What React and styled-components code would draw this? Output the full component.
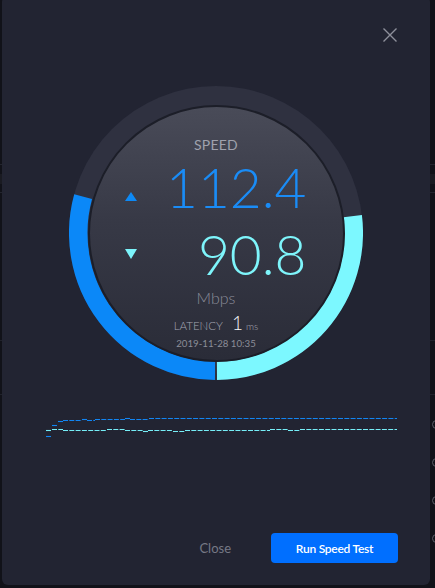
import React from "react";
import styled, { createGlobalStyle } from "styled-components";

const Global = createGlobalStyle`
  html, body {
    margin: 0;
    padding: 0;
    background: #111219;
    overflow: hidden;
  }
  body {
    width: 435px;
    height: 588px;
    position: relative;
    font-family: Lato, "Noto Sans", sans-serif;
  }
`;

/* ---------- page behind the dialog ---------- */

const Page = styled.div`
  width: 450px;
  padding-top: 164px;
  box-sizing: border-box;
`;

const TableHead = styled.div`
  height: 29px;
  border-top: 1px solid #23252e;
  border-bottom: 1px solid #23252e;
  box-sizing: border-box;
  display: flex;
  align-items: center;
`;

const HeadCell = styled.div`
  height: 10px;
  flex: 1;
  background: #1a1b22;
`;

const Section = styled.div`
  height: ${(p) => p.$h}px;
  border-bottom: ${(p) => (p.$open ? "0" : "1px solid #20222b")};
  box-sizing: border-box;
`;

const DeviceRow = styled.div`
  height: 38px;
  display: flex;
  align-items: center;
  justify-content: flex-end;
  padding-right: 9px;
`;

const StatusRing = styled.span`
  width: 7px;
  height: 7px;
  border: 1.5px solid #5b5d66;
  border-radius: 50%;
`;

/* ---------- dialog ---------- */

const Dialog = styled.div`
  position: absolute;
  left: 2px;
  top: -4px;
  width: 428px;
  height: 589px;
  box-sizing: border-box;
  background: #222432;
  border-radius: 6px;
  display: flex;
  flex-direction: column;
`;

const Header = styled.div`
  display: flex;
  justify-content: flex-end;
  padding: 32px 33px 0 0;
`;

const CloseX = styled.button`
  width: 14px;
  height: 14px;
  padding: 0;
  border: 0;
  background: transparent;
  display: block;
  cursor: pointer;
  svg {
    display: block;
  }
`;

const Gauge = styled.div`
  margin-top: 44px;
  align-self: center;
  width: 294px;
  height: 294px;
  display: grid;
  > * {
    grid-area: 1 / 1;
  }
`;

const RingArt = styled.svg`
  width: 294px;
  height: 294px;
  display: block;
`;

const Face = styled.div`
  place-self: center;
  width: 257px;
  height: 257px;
  box-sizing: border-box;
  border-radius: 50%;
  border: 2px solid #1c1e28;
  background: linear-gradient(180deg, #494b58 0%, #373946 45%, #2a2c38 100%);
  display: flex;
  flex-direction: column;
  align-items: center;
  padding-top: 30px;
`;

const Caption = styled.div`
  font-size: 14px;
  line-height: 16px;
  color: #9fa1ad;
  letter-spacing: 0.2px;
`;

const Reading = styled.div`
  margin-top: ${(p) => p.$gap}px;
  width: 100%;
  box-sizing: border-box;
  padding: 0 36px 0 35.5px;
  height: 56px;
  display: flex;
  align-items: flex-start;
`;

const Arrow = styled.svg`
  width: 12px;
  height: 10px;
  margin-top: ${(p) => p.$drop}px;
  flex: none;
`;

const Value = styled.div`
  flex: 1;
  text-align: right;
  font-size: 55px;
  line-height: 56px;
  font-weight: 300;
  color: ${(p) => p.$color};
`;

const Unit = styled.div`
  margin-top: 6px;
  font-size: 16px;
  line-height: 20px;
  font-weight: 300;
  color: #8a8c98;
`;

const Latency = styled.div`
  margin-top: 5px;
  display: flex;
  align-items: baseline;
  line-height: 20px;
`;

const LatencyLabel = styled.span`
  font-size: 11.5px;
  font-weight: 300;
  color: #a4a6b2;
`;

const LatencyValue = styled.span`
  font-size: 19px;
  font-weight: 300;
  color: #f4f5f7;
  margin-left: 9px;
`;

const LatencyUnit = styled.span`
  font-size: 10px;
  font-weight: 300;
  color: #a4a6b2;
  margin-left: 3px;
`;

const Stamp = styled.div`
  margin-top: 1px;
  font-size: 9.7px;
  line-height: 12px;
  color: #8b8d98;
`;

const History = styled.svg`
  margin: 30px 0 0 42px;
  width: 356px;
  height: 30px;
  display: block;
`;

const Footer = styled.div`
  margin-top: auto;
  display: flex;
  justify-content: flex-end;
  align-items: center;
  gap: 40px;
  padding: 0 32px 22px 0;
`;

const TextButton = styled.button`
  border: 0;
  background: transparent;
  padding: 0;
  font-family: inherit;
  font-size: 13px;
  color: #767885;
  cursor: pointer;
`;

const PrimaryButton = styled.button`
  width: 127px;
  height: 30px;
  border: 0;
  border-radius: 4px;
  background: #006fff;
  color: #ffffff;
  font-family: inherit;
  font-size: 12px;
  font-weight: 600;
  letter-spacing: -0.25px;
  cursor: pointer;
`;

/* ---------- helpers ---------- */

const C = 147;
const R = 137.75;

function pt(deg) {
  const a = (deg * Math.PI) / 180;
  return [C + R * Math.cos(a), C + R * Math.sin(a)];
}

function arc(from, to) {
  const [x1, y1] = pt(from);
  const [x2, y2] = pt(to);
  const large = to - from > 180 ? 1 : 0;
  return `M ${x1} ${y1} A ${R} ${R} 0 ${large} 1 ${x2} ${y2}`;
}

// [x start, x end, y] in chart coordinates (chart origin at x 44, y 410)
const upload = [
  [8, 13, 15],
  [14, 19, 11],
  [19, 38, 10],
  [38, 43, 9],
  [43, 51, 10],
  [51, 81, 9],
  [81, 86, 8],
  [86, 105, 9],
  [105, 353, 8],
];

const uploadStart = [[2, 7, 26]];

const download = [
  [2, 7, 20],
  [8, 19, 19],
  [19, 63, 20],
  [63, 81, 19],
  [81, 99, 20],
  [99, 104, 21],
  [104, 129, 20],
  [129, 141, 21],
  [141, 226, 20],
  [226, 244, 19],
  [244, 256, 20],
  [256, 353, 19],
];

function Steps({ data, color }) {
  return data.map(([a, b, y], i) => (
    <line
      key={i}
      x1={a}
      x2={b}
      y1={y + 0.5}
      y2={y + 0.5}
      stroke={color}
      strokeWidth="1.1"
      strokeDasharray="5 1.3"
    />
  ));
}

export default function App() {
  return (
    <>
      <Global />
      <Page>
        <TableHead>
          <HeadCell />
        </TableHead>
        <Section $h={148} />
        <Section $h={54} />
        <Section $h={10} $open />
        {[0, 1, 2, 3].map((i) => (
          <DeviceRow key={i}>
            <StatusRing />
          </DeviceRow>
        ))}
      </Page>

      <Dialog>
        <Header>
          <CloseX aria-label="Close">
            <svg width="14" height="14" viewBox="0 0 14 14">
              <path
                d="M0.5 0.5 L13.5 13.5 M13.5 0.5 L0.5 13.5"
                stroke="#8e909b"
                strokeWidth="1.4"
                fill="none"
              />
            </svg>
          </CloseX>
        </Header>

        <Gauge>
          <RingArt viewBox="0 0 294 294">
            <circle cx={C} cy={C} r={147} fill="#2f3140" />
            <path d={arc(90.4, 195.3)} stroke="#0b88f8" strokeWidth="18.5" fill="none" />
            <path d={arc(-7, 89.6)} stroke="#7cf8ff" strokeWidth="18.5" fill="none" />
          </RingArt>
          <Face>
            <Caption>SPEED</Caption>
            <Reading $gap={6}>
              <Arrow $drop={33} viewBox="0 0 12 10">
                <polygon points="6,0 12,9 0,9" fill="#0d89f5" />
              </Arrow>
              <Value $color="#1a8cf6">112.4</Value>
            </Reading>
            <Reading $gap={11}>
              <Arrow $drop={23} viewBox="0 0 12 10">
                <polygon points="0,0 12,0 6,10" fill="#7cf4fb" />
              </Arrow>
              <Value $color="#7ef5fb">90.8</Value>
            </Reading>
            <Unit>Mbps</Unit>
            <Latency>
              <LatencyLabel>LATENCY</LatencyLabel>
              <LatencyValue>1</LatencyValue>
              <LatencyUnit>ms</LatencyUnit>
            </Latency>
            <Stamp>2019-11-28 10:35</Stamp>
          </Face>
        </Gauge>

        <History viewBox="0 0 356 30">
          <Steps data={upload} color="#1285f2" />
          <Steps data={uploadStart} color="#1285f2" />
          <Steps data={download} color="#76eef7" />
        </History>

        <Footer>
          <TextButton>Close</TextButton>
          <PrimaryButton>Run Speed Test</PrimaryButton>
        </Footer>
      </Dialog>
    </>
  );
}
